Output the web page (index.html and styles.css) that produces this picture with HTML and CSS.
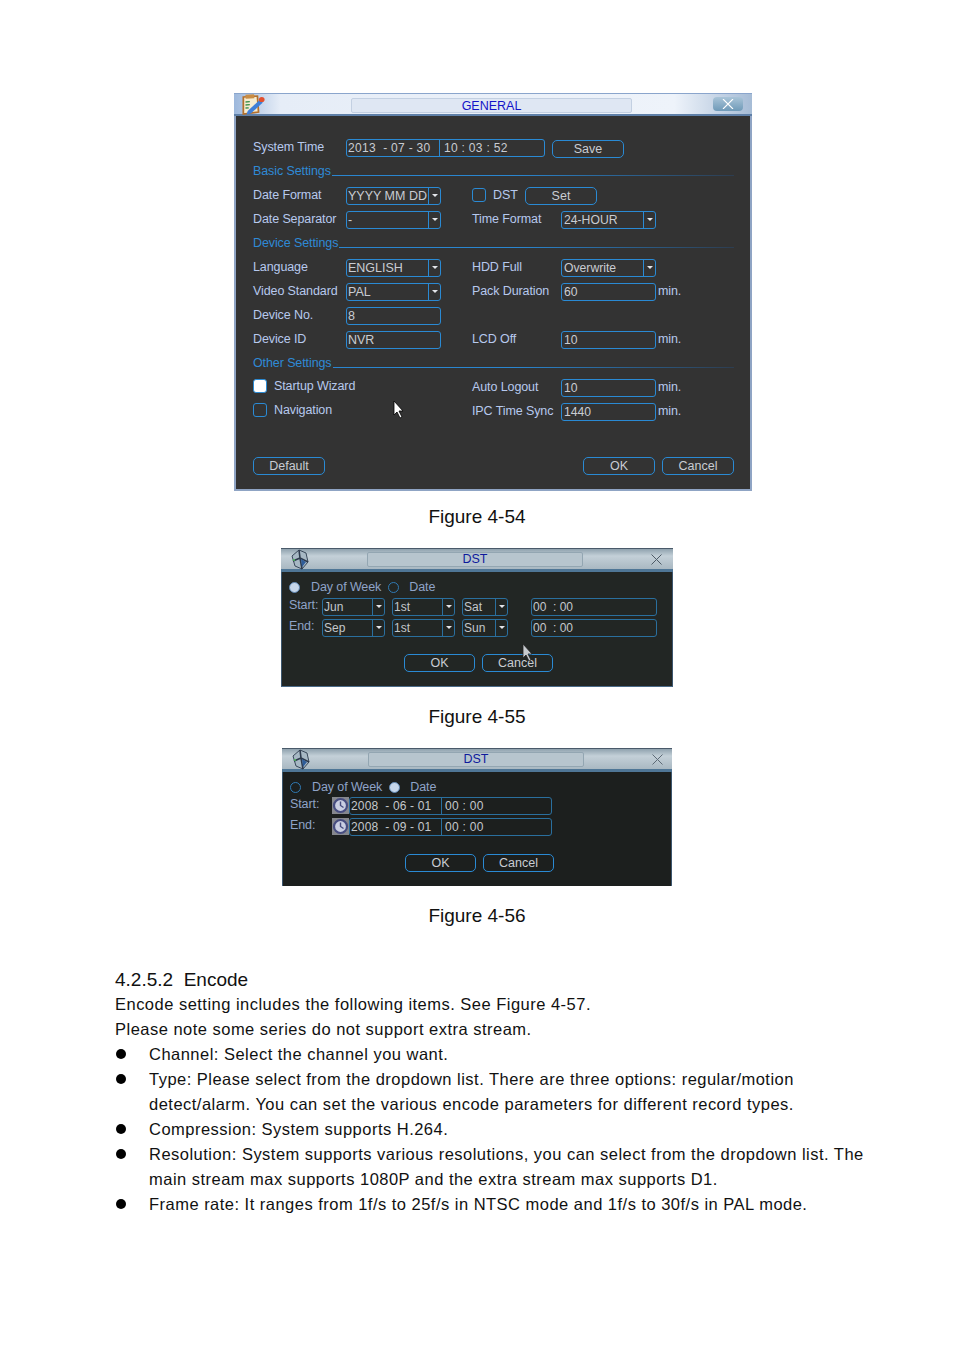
FILE: index.html
```html
<!DOCTYPE html>
<html lang="en">
<head>
    <meta charset="UTF-8">
    <meta name="viewport" content="width=device-width, initial-scale=1.0">
    <title>4.2.5.2 Encode</title>
    <link rel="stylesheet" href="styles.css">
</head>
<body>
    <div class="page">
        <!-- Figure 4-54 -->
        <div class="win win-general">
            <div class="titlebar">
                <svg class="title-icon" width="26" height="21" viewBox="0 0 24 21" preserveAspectRatio="none">
                    <path d="M4 3l13-1 1 16-14 2z" fill="#f6ecd0" stroke="#b5702a" stroke-width="1.6"/>
                    <rect x="6" y="0.5" width="8" height="4" fill="#c98d45" transform="rotate(-4 10 2)"/>
                    <path d="M6 8l4-.3M6 11l4-.3M6 14l3-.2" stroke="#3a8f4a" stroke-width="1.3"/>
                    <path d="M8 17l11-11 3 2.500-11 11-4 1z" fill="#3f7fd8"/>
                    <circle cx="21" cy="5.500" r="2.600" fill="#e2502e"/>
                </svg>
                <div class="title-plate">GENERAL</div>
                <div class="close-btn">
                    <svg width="12" height="10" viewBox="0 0 12 10"><path d="M1 0l10 10M11 0L1 10" stroke="#fff" stroke-width="1.1"/></svg>
                </div>
            </div>
            <div class="win-body">
                <div class="row row-time">
                    <span class="label">System Time</span>
                    <div class="field date-field wide"><span class="d-date">2013 &nbsp;- 07 - 30</span><span class="d-time">10 : 03 : 52</span></div>
                    <button class="btn btn-save">Save</button>
                </div>
                <div class="section"><span>Basic Settings</span><i></i></div>
                <div class="row">
                    <span class="label">Date Format</span>
                    <div class="field select"><span>YYYY MM DD</span><b></b></div>
                    <div class="dst-cell"><span class="check"></span><span class="label dst-label">DST</span><button class="btn btn-set">Set</button></div>
                </div>
                <div class="row">
                    <span class="label">Date Separator</span>
                    <div class="field select"><span>-</span><b></b></div>
                    <span class="label col2">Time Format</span>
                    <div class="field select small"><span>24-HOUR</span><b></b></div>
                </div>
                <div class="section"><span>Device Settings</span><i></i></div>
                <div class="row">
                    <span class="label">Language</span>
                    <div class="field select"><span>ENGLISH</span><b></b></div>
                    <span class="label col2">HDD Full</span>
                    <div class="field select small"><span>Overwrite</span><b></b></div>
                </div>
                <div class="row">
                    <span class="label">Video Standard</span>
                    <div class="field select"><span>PAL</span><b></b></div>
                    <span class="label col2">Pack Duration</span>
                    <div class="field small"><span>60</span></div>
                    <span class="label unit">min.</span>
                </div>
                <div class="row">
                    <span class="label">Device No.</span>
                    <div class="field"><span>8</span></div>
                </div>
                <div class="row">
                    <span class="label">Device ID</span>
                    <div class="field"><span>NVR</span></div>
                    <span class="label col2">LCD Off</span>
                    <div class="field small"><span>10</span></div>
                    <span class="label unit">min.</span>
                </div>
                <div class="section"><span>Other Settings</span><i></i></div>
                <div class="row">
                    <div class="check-cell"><span class="check on"></span><span class="label">Startup Wizard</span></div>
                    <span class="label col2">Auto Logout</span>
                    <div class="field small"><span>10</span></div>
                    <span class="label unit">min.</span>
                </div>
                <div class="row">
                    <div class="check-cell"><span class="check"></span><span class="label">Navigation</span></div>
                    <span class="label col2">IPC Time Sync</span>
                    <div class="field small"><span>1440</span></div>
                    <span class="label unit">min.</span>
                </div>
                <div class="btn-row">
                    <button class="btn">Default</button>
                    <div class="btn-right">
                        <button class="btn">OK</button>
                        <button class="btn">Cancel</button>
                    </div>
                </div>
                <svg class="cursor cursor-general" width="12" height="18" viewBox="0 0 12 18"><path d="M1 0v14l3-3 3 6 2-1-3-6h4z" fill="#fff" stroke="#000" stroke-width=".8"/></svg>
            </div>
        </div>
        <p class="caption">Figure 4-54</p>

        <!-- Figure 4-55 -->
        <div class="win win-dst win-55">
            <div class="titlebar dst-bar">
                <svg class="title-icon" width="22" height="21" viewBox="0 0 22 21">
                    <path d="M3 7l7-6 7 3 2 9-6 7-7-3z" fill="#a7b8c4" stroke="#39485a" stroke-width="1"/>
                    <path d="M10 1l1 8 8 4M11 9l-7 3M11 9l2 11" stroke="#2e3b4d" stroke-width="1.6" fill="none"/>
                    <path d="M12 10l5 3-4 5z" fill="#2f5d9a"/>
                    <circle cx="5" cy="11" r="1" fill="#4fc05a"/>
                </svg>
                <div class="title-plate dst-plate">DST</div>
                <svg class="close-x" width="11" height="11" viewBox="0 0 11 11"><path d="M.5.5l10 10M10.500.5l-10 10" stroke="#4d5a66" stroke-width="1"/></svg>
            </div>
            <div class="dst-body">
                <div class="radio-row">
                    <span class="radio on"></span><span class="label dow">Day of Week</span>
                    <span class="radio"></span><span class="label">Date</span>
                </div>
                <div class="dst-row">
                    <span class="label dst-key">Start:</span>
                    <div class="field select f-month"><span>Jun</span><b></b></div>
                    <div class="field select f-nth"><span>1st</span><b></b></div>
                    <div class="field select f-day"><span>Sat</span><b></b></div>
                    <div class="field f-time"><span>00 &nbsp;: 00</span></div>
                </div>
                <div class="dst-row">
                    <span class="label dst-key">End:</span>
                    <div class="field select f-month"><span>Sep</span><b></b></div>
                    <div class="field select f-nth"><span>1st</span><b></b></div>
                    <div class="field select f-day"><span>Sun</span><b></b></div>
                    <div class="field f-time"><span>00 &nbsp;: 00</span></div>
                </div>
                <div class="dst-btns">
                    <button class="btn">OK</button>
                    <button class="btn">Cancel</button>
                </div>
                <svg class="cursor cursor-dst" width="12" height="18" viewBox="0 0 12 18"><path d="M1 0v14l3-3 3 6 2-1-3-6h4z" fill="#c8ccd0" stroke="#222" stroke-width=".8"/></svg>
            </div>
        </div>
        <p class="caption">Figure 4-55</p>

        <!-- Figure 4-56 -->
        <div class="win win-dst win-56">
            <div class="titlebar dst-bar">
                <svg class="title-icon" width="22" height="21" viewBox="0 0 22 21">
                    <path d="M3 7l7-6 7 3 2 9-6 7-7-3z" fill="#a7b8c4" stroke="#39485a" stroke-width="1"/>
                    <path d="M10 1l1 8 8 4M11 9l-7 3M11 9l2 11" stroke="#2e3b4d" stroke-width="1.6" fill="none"/>
                    <path d="M12 10l5 3-4 5z" fill="#2f5d9a"/>
                    <circle cx="5" cy="11" r="1" fill="#4fc05a"/>
                </svg>
                <div class="title-plate dst-plate">DST</div>
                <svg class="close-x" width="11" height="11" viewBox="0 0 11 11"><path d="M.5.5l10 10M10.500.5l-10 10" stroke="#5d6a76" stroke-width="1"/></svg>
            </div>
            <div class="dst-body dark">
                <div class="radio-row">
                    <span class="radio"></span><span class="label dow">Day of Week</span>
                    <span class="radio on"></span><span class="label">Date</span>
                </div>
                <div class="dst-row date-row">
                    <span class="label dst-key">Start:</span>
                    <svg class="clock" width="17" height="17" viewBox="0 0 17 17"><rect width="17" height="17" fill="#85878e"/><circle cx="8.500" cy="8.500" r="6.500" fill="#c9cee2" stroke="#474d80" stroke-width="2.200"/><path d="M8.500 4.500v4l3 2" stroke="#474d80" stroke-width="1.400" fill="none"/></svg>
                    <div class="field date-field f-date"><span class="d-date">2008 &nbsp;- 06 - 01</span><span class="d-time">00 : 00</span></div>
                </div>
                <div class="dst-row date-row">
                    <span class="label dst-key">End:</span>
                    <svg class="clock" width="17" height="17" viewBox="0 0 17 17"><rect width="17" height="17" fill="#85878e"/><circle cx="8.500" cy="8.500" r="6.500" fill="#c9cee2" stroke="#474d80" stroke-width="2.200"/><path d="M8.500 4.500v4l3 2" stroke="#474d80" stroke-width="1.400" fill="none"/></svg>
                    <div class="field date-field f-date"><span class="d-date">2008 &nbsp;- 09 - 01</span><span class="d-time">00 : 00</span></div>
                </div>
                <div class="dst-btns">
                    <button class="btn">OK</button>
                    <button class="btn">Cancel</button>
                </div>
            </div>
        </div>
        <p class="caption">Figure 4-56</p>

        <h4 class="heading">4.2.5.2&nbsp; Encode</h4>
        <p class="text">Encode setting includes the following items. See Figure 4-57.</p>
        <p class="text">Please note some series do not support extra stream.</p>
        <ul class="bullets">
            <li>Channel: Select the channel you want.</li>
            <li>Type: Please select from the dropdown list. There are three options: regular/motion<br>detect/alarm. You can set the various encode parameters for different record types.</li>
            <li>Compression: System supports H.264.</li>
            <li>Resolution: System supports various resolutions, you can select from the dropdown list. The<br>main stream max supports 1080P and the extra stream max supports D1.</li>
            <li>Frame rate: It ranges from 1f/s to 25f/s in NTSC mode and 1f/s to 30f/s in PAL mode.</li>
        </ul>
    </div>
</body>
</html>
```

FILE: styles.css
```css
* {
    box-sizing: border-box;
}
html, body {
    margin: 0;
    padding: 0;
    background-color: white;
}
body {
    font-family: "Liberation Sans", Arial, sans-serif;
    color: #111;
}
.page {
    width: 954px;
    height: 1350px;
    padding-top: 93px;
    overflow: hidden;
}

/* capture windows */
.win {
    position: relative;
}
.win-general {
    width: 518px;
    height: 398px;
    margin-left: 234px;
    background-color: #333333;
    border: 2px solid #8fa4c4;
    border-top: 0;
}
.win-dst {
    background-color: #222624;
    border-left: 1px solid #3c566e;
    border-right: 1px solid #3c566e;
    border-bottom: 1px solid #4a6a88;
}
.win-55 {
    width: 392px;
    height: 139px;
    margin-left: 281px;
    margin-bottom: 4px;
}
.win-56 {
    width: 390px;
    height: 138px;
    margin-left: 282px;
    margin-bottom: 4px;
}
.titlebar {
    display: flex;
    align-items: center;
    height: 23px;
    margin: 0 -2px;
    padding-left: 5px;
    background: linear-gradient(to right, #9db8dc, #e6edf7 9%, #eef3fa 85%, #a6bcd6);
    border-top: 1px solid #8aa5cc;
    border-bottom: 2px solid #5f80a8;
}
.title-icon {
    flex: none;
}
.title-plate {
    width: 281px;
    height: 15px;
    margin-left: 86px;
    margin-top: 2px;
    background-color: #dfe7f3;
    border: 1px solid #c3d0e2;
    border-radius: 2px;
    color: #1414c8;
    font-size: 12.5px;
    line-height: 15px;
    text-align: center;
}
.close-btn {
    display: flex;
    align-items: center;
    justify-content: center;
    width: 30px;
    height: 14px;
    margin-left: 81px;
    background: linear-gradient(#a9c4d8, #6f9ab8);
    border-radius: 4px;
}
.dst-bar {
    height: 24px;
    margin: 0 -1px;
    padding-left: 8px;
    background: linear-gradient(#8fa2ae, #c4d0d8 35%, #a9b8c2);
    border-top: 1px solid #4a5a6a;
    border-bottom: 3px solid #4f7696;
}
.dst-plate {
    width: 216px;
    margin-left: 56px;
    margin-top: 0;
    background-color: #b7c5ce;
    border-color: #93a6b2;
    color: #0e1a9c;
    line-height: 13px;
}
.close-x {
    margin-left: 68px;
}

/* general window form */
.win-body {
    padding: 20px 16px 0 17px;
}
.row {
    display: grid;
    grid-template-columns: 93px 95px 31px 89px 95px auto;
    align-items: center;
    height: 24px;
}
.row-time {
    display: flex;
}
.row-time > .label {
    width: 93px;
}
.label {
    color: #b7c9ee;
    font-size: 12.5px;
    letter-spacing: -.1px;
    white-space: nowrap;
}
.row .label {
    padding-bottom: 2px;
}
.col2 {
    grid-column: 4;
}
.unit {
    padding-left: 2px;
}
.field {
    display: flex;
    align-items: center;
    height: 18px;
    padding-left: 1px;
    border: 1px solid #2a8ad4;
    border-radius: 3px;
    color: #c9ccd2;
    font-size: 12.5px;
    white-space: nowrap;
    overflow: hidden;
}
.field.small {
    padding-left: 2px;
    font-size: 12.2px;
}
.select span {
    flex: 1;
}
.select b {
    position: relative;
    flex: none;
    width: 12px;
    height: 100%;
    border-left: 1px solid #2a8ad4;
}
.select b::after {
    content: "";
    position: absolute;
    top: 6px;
    left: 3px;
    border-left: 3px solid transparent;
    border-right: 3px solid transparent;
    border-top: 3px solid #e4e6ea;
}
.date-field {
    font-size: 12px;
    letter-spacing: .3px;
}
.date-field.wide {
    width: 199px;
    flex: none;
}
.d-date {
    width: 92px;
    flex: none;
    border-right: 1px solid #2a8ad4;
    line-height: 16px;
}
.d-time {
    padding-left: 4px;
}
.btn {
    height: 18px;
    padding: 0;
    background-color: #333333;
    border: 1px solid #2a8ad4;
    border-radius: 5px;
    color: #c9ccd2;
    font-family: inherit;
    font-size: 12.5px;
}
.btn-save {
    width: 72px;
    margin-left: 7px;
    margin-top: 2px;
}
.dst-cell {
    grid-column: 4 / 6;
    display: flex;
    align-items: center;
}
.dst-label {
    margin-left: 7px;
    width: 32px;
}
.btn-set {
    width: 72px;
}
.check {
    display: block;
    flex: none;
    width: 14px;
    height: 14px;
    border: 1px solid #2a8ad4;
    border-radius: 3px;
}
.check.on {
    background-color: white;
}
.check-cell {
    grid-column: 1 / 4;
    display: flex;
    align-items: center;
    gap: 7px;
}
.check-cell .check {
    margin-bottom: 4px;
}
.check-cell .label {
    padding-bottom: 4px;
}
.dst-cell .check {
    margin-bottom: 2px;
}
.section {
    display: flex;
    align-items: flex-end;
    height: 24px;
    padding-bottom: 7px;
    color: #2f8ad6;
    font-size: 12.5px;
    letter-spacing: -.1px;
}
.section span {
    margin-bottom: -1px;
}
.section i {
    flex: 1;
    height: 1px;
    margin: 0 0 1px 1px;
    background: linear-gradient(to right, #2a86d0 45%, #2d3d50);
}
.btn-row {
    display: flex;
    justify-content: space-between;
    margin-top: 33px;
}
.btn-row .btn {
    width: 72px;
}
.btn-right {
    display: flex;
    gap: 7px;
}
.cursor {
    position: absolute;
}
.cursor-general {
    left: 157px;
    top: 308px;
}
.cursor-dst {
    left: 240px;
    top: 96px;
}

/* dst dialogs */
.dst-body {
    height: 114px;
    padding: 3px 15px 0 7px;
}
.dst-body .btn {
    background-color: #222624;
    width: 71px;
}
.dst-body .label {
    color: #8fa3c8;
}
.dst-body .field {
    height: 18px;
    font-size: 12px;
    color: #c4c8cc;
    border-color: #2a6f9e;
}
.dst-body .select b {
    border-color: #2a6f9e;
}
.dst-body .d-date {
    border-color: #2a6f9e;
}
.radio-row {
    display: flex;
    align-items: center;
    height: 24px;
    margin-bottom: -3px;
}
.dark .radio-row {
    margin-bottom: -4px;
}
.radio {
    display: block;
    flex: none;
    width: 11px;
    height: 11px;
    border: 1px solid #2f7ab4;
    border-radius: 50%;
}
.radio.on {
    background-color: #c6d6ea;
    border-color: #5f88b4;
}
.dow {
    margin-left: 11px;
    margin-right: 7px;
}
.radio + .label:last-child {
    margin-left: 10px;
}
.dst-row {
    display: flex;
    align-items: center;
    height: 21px;
}
.dst-key {
    width: 33px;
    padding-bottom: 3px;
}
.f-month {
    width: 63px;
}
.f-nth {
    width: 63px;
    margin-left: 7px;
}
.f-day {
    width: 46px;
    margin-left: 7px;
}
.f-time {
    width: 126px;
    margin-left: 23px;
}
.dst-btns {
    display: flex;
    gap: 7px;
    margin: 16px 0 0 115px;
}
.date-row .dst-key {
    width: 42px;
}
.clock {
    flex: none;
}
.f-date {
    width: 203px;
}
.f-date .d-date {
    width: 91px;
    letter-spacing: .15px;
}
.f-date .d-time {
    padding-left: 3px;
}
.dark {
    background-color: #1c1f1e;
}
.dark .btn {
    background-color: #1c1f1e;
}
.dark .dst-btns {
    margin-top: 17px;
}

/* document text */
.caption {
    height: 57px;
    margin: 0;
    padding-top: 15px;
    font-size: 19px;
    line-height: 21px;
    text-align: center;
}
.heading {
    margin: 21px 0 0;
    padding-left: 115px;
    font-size: 19px;
    font-weight: normal;
    line-height: 24px;
}
.text {
    margin: 0;
    padding-left: 115px;
    font-size: 16.5px;
    letter-spacing: .48px;
    line-height: 25px;
}
.bullets {
    margin: 0;
    padding: 0 0 0 149px;
    list-style: none;
    font-size: 16.5px;
    letter-spacing: .48px;
    line-height: 25px;
}
.bullets li {
    position: relative;
    white-space: nowrap;
}
.bullets li::before {
    content: "";
    position: absolute;
    left: -33px;
    top: 7px;
    width: 10px;
    height: 10px;
    background-color: black;
    border-radius: 50%;
}
```
